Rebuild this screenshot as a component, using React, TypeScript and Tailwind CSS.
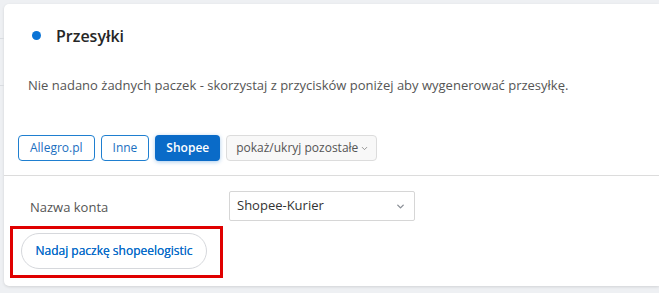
import { ChevronDown } from 'lucide-react';

const tabs = [
  { label: 'Allegro.pl', active: false },
  { label: 'Inne', active: false },
  { label: 'Shopee', active: true },
];

export default function App() {
  return (
    <div className="relative w-[659px] h-[293px] overflow-hidden bg-[#eef0f3] font-['Open_Sans',sans-serif]">
      {/* faint page lines behind the card */}
      <div className="absolute left-0 top-[38px] w-[4px] h-px bg-[#d9dce0]" />
      <div className="absolute left-0 top-[85px] w-[4px] h-px bg-[#d9dce0]" />

      <div className="ml-[4px] mt-[4px] h-[282px] bg-white rounded-l-[5px] shadow-[0_1px_3px_rgba(0,0,0,0.12)] flex flex-col">
        <div className="flex items-center h-[62px] pl-[28px] pt-[1px]">
          <span className="w-[9px] h-[9px] rounded-full bg-[#0b74d6]" />
          <h2 className="ml-[15px] text-[16px] font-semibold text-[#262626]">Przesyłki</h2>
        </div>

        <p className="mt-[10px] pl-[24px] text-[13px] text-[#555] leading-[18px]">
          Nie nadano żadnych paczek - skorzystaj z przycisków poniżej aby wygenerować przesyłkę.
        </p>

        <div className="mt-[41px] flex items-center gap-[6px] pl-[14px]">
          {tabs.map(t => (
            <button
              key={t.label}
              className={
                t.active
                  ? 'h-[26px] px-[11px] rounded-[4px] bg-[#0a6bc8] text-white text-[12px] font-semibold shadow-[0_1px_4px_rgba(10,107,200,0.35)]'
                  : 'h-[26px] px-[11px] rounded-[4px] border border-[#1f7fd0] bg-white text-[#1b6fbf] text-[12px]'
              }
            >
              {t.label}
            </button>
          ))}
          <button className="h-[26px] pl-[9px] pr-[7px] rounded-[4px] border border-[#dcdcdc] bg-[#f8f8f8] text-[#555] text-[12px] flex items-center gap-[2px]">
            pokaż/ukryj pozostałe
            <ChevronDown className="w-[9px] h-[9px] text-[#777]" strokeWidth={2} />
          </button>
        </div>

        <div className="mt-[14px] h-px bg-[#dcdcdc]" />

        <div className="flex items-center mt-[15px] pl-[26px] h-[30px]">
          <span className="w-[199px] text-[13px] text-[#555] pt-[4px]">Nazwa konta</span>
          <div className="w-[186px] h-[30px] border border-[#d6d6d6] rounded-[2px] flex items-center justify-between pl-[7px] pr-[8px]">
            <span className="text-[13px] text-[#333]">Shopee-Kurier</span>
            <ChevronDown className="w-[11px] h-[11px] text-[#8a8f96]" strokeWidth={3} />
          </div>
        </div>

        <div className="mt-[12px] pl-[17px]">
          <button className="h-[36px] w-[186px] rounded-full border border-[#d6d8dc] bg-white text-[#0a6bc8] text-[12px] [text-shadow:0_0_0.3px_#0a6bc8]">
            Nadaj paczkę shopeelogistic
          </button>
        </div>
      </div>

      {/* red highlight annotation */}
      <div className="absolute left-[10px] top-[226px] w-[213px] h-[52px] border-[3px] border-[#e00000] pointer-events-none" />
    </div>
  );
}
